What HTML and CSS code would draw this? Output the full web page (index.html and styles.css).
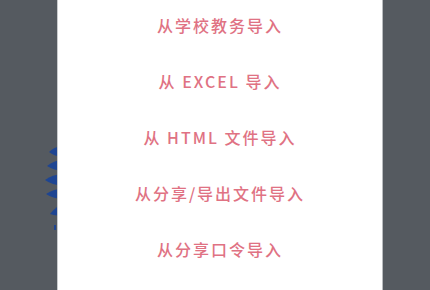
FILE: index.html
```html
<!DOCTYPE html>
<html lang="zh-CN">
<head>
    <meta charset="UTF-8">
    <meta name="viewport" content="width=device-width, initial-scale=1.0">
    <title>导入课表</title>
    <link rel="stylesheet" href="styles.css">
</head>
<body>
    <div class="backdrop">
        <!-- decoration of the page behind the sheet -->
        <svg class="leaves" width="24" height="92" viewBox="0 0 24 92">
            <path d="M4 10 Q12 2 22 6 L22 14 Q12 16 4 10 Z" fill="#1e4592"/>
            <path d="M2 24 Q12 16 22 19 L22 28 Q12 30 2 24 Z" fill="#1e4592"/>
            <path d="M0 38 Q10 31 22 33 L22 43 Q10 45 0 38 Z" fill="#1e4592"/>
            <path d="M1 52 Q10 46 22 47 L22 57 Q10 58 1 52 Z" fill="#1e4592"/>
            <path d="M5 72 Q12 62 22 63 L22 74 Q12 74 5 72 Z" fill="#1e4592"/>
            <rect x="9" y="83" width="2" height="5" fill="#1e4592"/>
        </svg>

        <div class="sheet">
            <ul class="menu">
                <li>从学校教务导入</li>
                <li>从 EXCEL 导入</li>
                <li>从 HTML 文件导入</li>
                <li>从分享/导出文件导入</li>
                <li>从分享口令导入</li>
            </ul>
        </div>
    </div>
</body>
</html>
```

FILE: styles.css
```css
body {
    margin: 0;
    padding: 0;
    background-color: #555a60;
    font-family: "Noto Sans CJK SC", "Noto Sans", sans-serif;
    overflow: hidden;
}

.backdrop {
    position: relative;
    height: 290px;
    display: flex;
    justify-content: center;
}

.leaves {
    position: absolute;
    left: 45px;
    top: 142px;
}

.sheet {
    position: relative;
    width: 324px;
    height: 290px;
    background-color: #fff;
    border-left: 1px solid #c9cbcd;
    border-right: 1px solid #b9bcbf;
    margin-left: 10px;
}

.menu {
    list-style: none;
    margin: -3px 0 0;
    padding: 0;
}

.menu li {
    height: 56px;
    display: flex;
    align-items: center;
    justify-content: center;
    color: #e07283;
    font-size: 16px;
    font-weight: 500;
    letter-spacing: 2px;
}
```
